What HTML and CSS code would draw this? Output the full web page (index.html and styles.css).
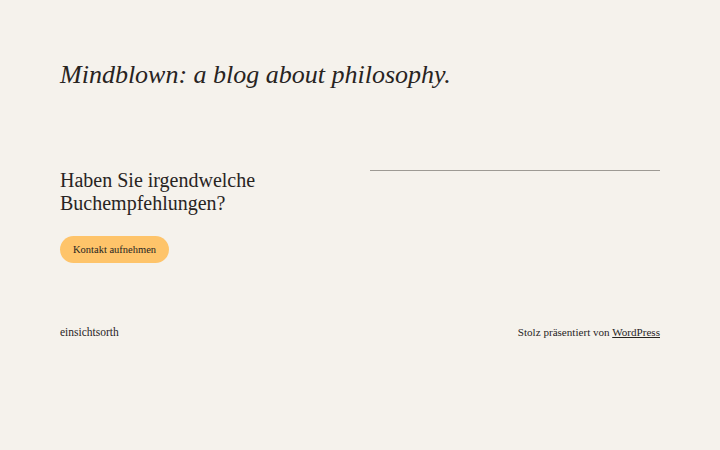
FILE: index.html
```html
<!DOCTYPE html>
<html lang="de">
<head>
<meta charset="utf-8">
<link rel="stylesheet" href="styles.css">
</head>
<body>
<div class="page">
  <header class="site-header">
    <p class="site-title">Mindblown: a blog about philosophy.</p>
  </header>
  <section class="cta">
    <div class="cta-left">
      <h2 class="cta-heading">Haben Sie irgendwelche Buchempfehlungen?</h2>
      <a class="btn" href="#">Kontakt aufnehmen</a>
    </div>
    <div class="cta-right">
      <hr class="rule">
    </div>
  </section>
  <footer class="site-footer">
    <span class="footer-name">einsichtsorth</span>
    <span class="footer-credit">Stolz präsentiert von <a href="#" class="footer-link">WordPress</a></span>
  </footer>
</div>
</body>
</html>
```
FILE: styles.css
```css
html, body {
  margin: 0;
  padding: 0;
  background: #f5f2ec;
}
body {
  font-family: "Liberation Serif", "DejaVu Serif", serif;
  color: #28241f;
}
.page {
  width: 600px;
  margin: 0 auto;
  padding-top: 57px;
}
.site-title {
  margin: 0;
  font-style: italic;
  font-size: 26px;
  line-height: 36px;
}
.cta {
  display: flex;
  margin-top: 61px;
  gap: 60px;
}
.cta-left {
  flex: 0 0 250px;
}
.cta-heading {
  margin: 15px 0 0;
  font-weight: normal;
  font-size: 20px;
  line-height: 23px;
}
.btn {
  display: inline-block;
  margin-top: 21px;
  background: #fec46a;
  color: #28241f;
  text-decoration: none;
  font-size: 10.5px;
  line-height: 27px;
  height: 27px;
  padding: 0 13px;
  border-radius: 14px;
}
.cta-right {
  flex: 1;
}
.rule {
  margin: 16px 0 0;
  border: 0;
  border-top: 1px solid #9d9a94;
  height: 0;
}
.site-footer {
  display: flex;
  justify-content: space-between;
  align-items: baseline;
  margin-top: 61px;
  font-size: 11.5px;
  line-height: 16px;
}
.footer-credit {
  font-size: 11.1px;
}
.footer-link {
  color: #28241f;
  text-decoration: underline;
}
```
